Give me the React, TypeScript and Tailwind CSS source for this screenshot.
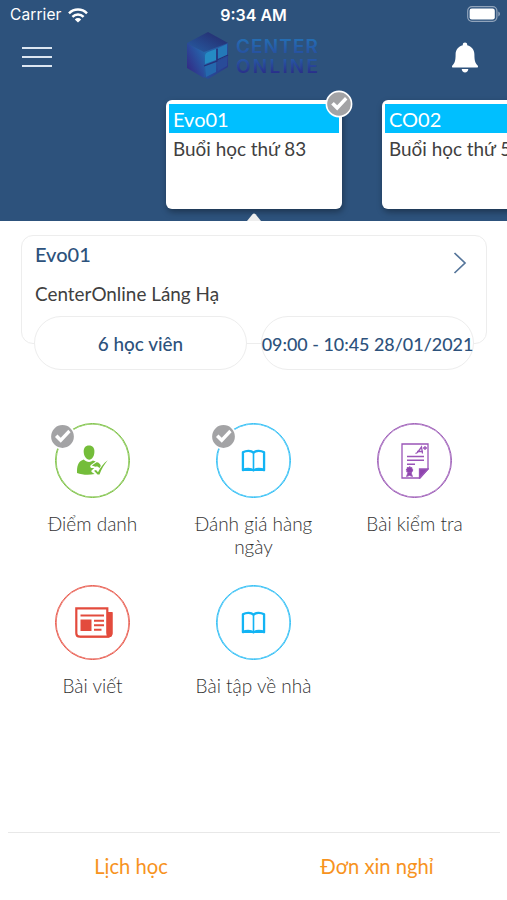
import type { ReactNode } from 'react';

interface Lesson {
  id: string;
  name: string;
  session: string;
  done?: boolean;
}

interface Action {
  label: string;
  ring: string;
  icon: ReactNode;
  done?: boolean;
}

const lessons: Lesson[] = [
  { id: 'evo01', name: 'Evo01', session: 'Buổi học thứ 83', done: true },
  { id: 'co02', name: 'CO02', session: 'Buổi học thứ 5' },
];

function CheckBadge({ className }: { className: string }) {
  return (
    <svg viewBox="0 0 28 28" className={className}>
      <circle cx="14" cy="14" r="12.6" fill="#a3a3a5" stroke="#fff" strokeWidth="1.6" />
      <path d="M6.2 14.6l2.6-2.7 3.4 3.3 7.8-8.1 2.4 2.5-10.2 10.8z" fill="#fff" />
    </svg>
  );
}

function WifiIcon() {
  return (
    <svg viewBox="0 0 20 15" className="w-5 h-[15px]" fill="none" stroke="#fff" strokeWidth="2.5">
      <path d="M1 5.3a12.8 12.8 0 0 1 18 0" />
      <path d="M4.4 8.8a8 8 0 0 1 11.2 0" />
      <path d="M10 14.6L6.8 11.4a4.6 4.6 0 0 1 6.4 0z" fill="#fff" stroke="none" />
    </svg>
  );
}

function BatteryIcon() {
  return (
    <svg viewBox="0 0 34 16" className="w-[34px] h-4">
      <rect x="0.7" y="0.7" width="29.2" height="14.6" rx="4.2" fill="none" stroke="#91a4bb" strokeWidth="1.2" />
      <rect x="2.6" y="2.6" width="25.2" height="10.8" rx="2.2" fill="#fff" />
      <path d="M31.3 5.6c2.2.7 2.2 4.1 0 4.8z" fill="#91a4bb" />
    </svg>
  );
}

function BellIcon() {
  return (
    <svg viewBox="0 0 26 31" className="w-[26px] h-[31px]" fill="#fff">
      <path d="M13 .5c1.3 0 2.2.9 2.2 2.1v.7c4.4 1 7.2 4.6 7.2 9.2 0 5.8.7 8.6 3.2 11 .8.8.4 2.1-.8 2.1H1.2c-1.2 0-1.6-1.3-.8-2.1 2.5-2.4 3.2-5.2 3.2-11 0-4.6 2.8-8.2 7.2-9.2v-.7C10.8 1.4 11.7.5 13 .5z" />
      <path d="M9.7 27h6.6c-.2 2.2-1.5 3.5-3.3 3.5S9.9 29.2 9.7 27z" />
    </svg>
  );
}

function Logo() {
  return (
    <svg viewBox="0 0 134 50" className="w-[134px] h-[50px] ml-0.5 -mt-0.5">
      <defs>
        <linearGradient id="cubeTop" x1="0" y1="1" x2="1" y2="0">
          <stop offset="0" stopColor="#2660a6" />
          <stop offset="1" stopColor="#252668" />
        </linearGradient>
        <linearGradient id="cubeLeft" x1="0" y1="1" x2="1" y2="0">
          <stop offset="0" stopColor="#35207d" />
          <stop offset="1" stopColor="#2271b5" />
        </linearGradient>
        <linearGradient id="cubeRight" x1="0" y1="0" x2="1" y2="1">
          <stop offset="0" stopColor="#2474b4" />
          <stop offset="1" stopColor="#2c2b80" />
        </linearGradient>
        <linearGradient id="logoText" x1="0" y1="0" x2="0" y2="1">
          <stop offset="0" stopColor="#2476b9" />
          <stop offset="1" stopColor="#27489b" />
        </linearGradient>
        <linearGradient id="logoTextLow" x1="0" y1="0" x2="0" y2="1">
          <stop offset="0" stopColor="#2663ad" />
          <stop offset="1" stopColor="#2a2180" />
        </linearGradient>
      </defs>
      <path d="M22 1L42 12 22 23 1 12z" fill="url(#cubeTop)" />
      <path d="M1 12l17 9v26L1 37z" fill="url(#cubeLeft)" />
      <path d="M18 21l24-9v24L22 48l-4-2z" fill="url(#cubeRight)" />
      <path d="M19 25q0-3 3-4l8-3v11l-11 4z" fill="#258bc4" />
      <path d="M32 17l9-4v12l-9 4z" fill="#2479b8" />
      <path d="M19 35l11-4v10l-10 5z" fill="#2468ad" />
      <path d="M32 30l9-4v9l-9 5z" fill="#294b98" />
      <path d="M18 35l13-5V18M31 29l11-5" fill="none" stroke="#263078" strokeWidth="1.3" />
      <g className="font-['Inter'] font-semibold" fontSize="19">
        <text x="50" y="22" textLength="82" fill="url(#logoText)">CENTER</text>
        <text x="50" y="42" textLength="82" fill="url(#logoTextLow)">ONLINE</text>
      </g>
    </svg>
  );
}

function BookIcon() {
  return (
    <svg viewBox="0 0 26 24" className="w-[25px] h-6" fill="none" stroke="#12b4f4" strokeWidth="2.4" strokeLinejoin="round">
      <path d="M13 3.3C10.5.8 5.5.8 2 3v18.5c3-1.6 8.5-1.6 11 .3 2.5-1.9 8-1.9 11-.3V3C20.5.8 15.5.8 13 3.3z" />
      <path d="M13 3.3v19.2" strokeWidth="1.7" />
      <path d="M2 21.6h22" strokeWidth="1.6" />
    </svg>
  );
}

function AttendanceIcon() {
  return (
    <svg viewBox="0 0 32 31" className="w-8 h-[31px] -translate-x-px" fill="#74bd3a">
      <path d="M13 .5c3.7 0 5.6 2.5 5.4 6.5-.2 4-2.2 7.7-5.2 7.7S7.9 11 7.7 7C7.5 3 9.3.5 13 .5z" />
      <path d="M7.7 14.5c1.7 1.7 3.3 2.4 5.4 2.4 1.5 0 2.6-.5 3.8-1.3l2.8.8-4.5 3.3c-1.7 1.2-1 3.2.9 3.3l2.2.1-2.5 2.2c-.8.8-.5 1.7.5 2.3l2.3 1.500c-6 1-12.600.8-17.600-1.200C1 22 1.500 16.500 7.700 14.500z" />
      <path d="M15.800 20.400l4.400-2.900c1.600-.8 4.200 1.300 4.600 3.500l-1.500 2.200c-1.200-1.700-2.500-1.800-3.800-1.500z" />
      <path d="M18 25.700l2-.8 2 2.300c2.500-4.900 5.300-8.500 9.700-11.900-3.300 4.200-6.200 8.700-8.200 14.200h-2z" />
    </svg>
  );
}

function ExamIcon() {
  return (
    <svg viewBox="0 0 28 36" className="w-7 h-9" fill="none" stroke="#9a55b8" strokeWidth="1.3">
      <path d="M1 1h26v25l-8 9H1z" />
      <path d="M18.5 26H27l-8.5 9z" fill="#8e44ad" />
      <path d="M6 13.5h17M6 17.3h17M6 21.2h8" strokeWidth="1.4" />
      <path d="M14.5 10.5l2-1 4-5.5 1 6.5M16 8.500h6M22 5h4M24 3v4" />
      <circle cx="8.5" cy="27" r="3" fill="#8e44ad" strokeDasharray="1.5 .7" />
      <path d="M7 29.5l-1.500 4 3-1 3 1-1.500-4z" fill="#8e44ad" strokeWidth=".8" />
    </svg>
  );
}

function NewsIcon() {
  return (
    <svg viewBox="0 0 38 31" className="w-[38px] h-[31px] translate-x-px">
      <path d="M32 5h5.500v21.500q-.5 4-4.500 4H5v-2h27z" fill="#e34b3d" />
      <path d="M1.300 1.300h31v24.200q0 3.200 2 4.200H4.800q-3.500 0-3.500-3.500z" fill="#fff" stroke="#e34b3d" strokeWidth="2.2" />
      <path d="M33 5.500h4.500v20.500q0 4-2.500 4t-2.300-4z" fill="#e34b3d" />
      <path d="M5.500 8.500H29" stroke="#e34b3d" strokeWidth="2" />
      <path d="M5.500 12.500h11v11.500H5.500z" fill="#e34b3d" />
      <path d="M19 13.700h10M19 18.200h10M19 22.700h7.500" stroke="#e34b3d" strokeWidth="2" />
    </svg>
  );
}

const actions: Action[] = [
  { label: 'Điểm danh', ring: 'text-[#7bc142]', icon: <AttendanceIcon />, done: true },
  { label: 'Đánh giá hàng ngày', ring: 'text-[#2bbdf5]', icon: <BookIcon />, done: true },
  { label: 'Bài kiểm tra', ring: 'text-[#9b59b6]', icon: <ExamIcon /> },
  { label: 'Bài viết', ring: 'text-[#e8574a]', icon: <NewsIcon /> },
  { label: 'Bài tập về nhà', ring: 'text-[#2bbdf5]', icon: <BookIcon /> },
];

function LessonCard({ lesson }: { lesson: Lesson }) {
  return (
    <div className="relative shrink-0 w-44 h-[109px] bg-white rounded-md p-[3px] pt-1 shadow-[1px_3px_6px_rgba(0,0,0,0.35)]">
      <div className="h-[29px] bg-[#00bfff] px-1 text-xl leading-[31px] text-white">{lesson.name}</div>
      <div className="px-1 mt-0.5 text-[18.9px] leading-7 text-[#404040] whitespace-nowrap">{lesson.session}</div>
      {lesson.done && <CheckBadge className="absolute w-7 h-7 -top-2.5 -right-[11px]" />}
    </div>
  );
}

function Header() {
  return (
    <header className="relative h-[221px] bg-[#2d527c] overflow-hidden">
      <div className="grid grid-cols-3 items-center h-[30px] pl-2.5 pr-1.5 text-white font-['Inter'] text-base">
        <div className="flex items-center gap-1.5">
          <span className="text-[15.5px] tracking-[0.1px]">Carrier</span>
          <WifiIcon />
        </div>
        <span className="text-center font-semibold whitespace-nowrap -ml-1">9:34 AM</span>
        <div className="flex justify-end -mt-0.5"><BatteryIcon /></div>
      </div>
      <div className="flex items-center justify-between h-[54px] pl-[22px] pr-[29px]">
        <button className="flex flex-col gap-[7px] w-[30px]">
          <span className="h-0.5 w-full bg-[#dce6f1]" />
          <span className="h-0.5 w-full bg-[#dce6f1]" />
          <span className="h-0.5 w-full bg-[#dce6f1]" />
        </button>
        <Logo />
        <button><BellIcon /></button>
      </div>
      <div className="flex gap-10 pl-[166px] pt-4">
        {lessons.map((l) => (
          <LessonCard key={l.id} lesson={l} />
        ))}
      </div>
      {/* pointer under the selected lesson */}
      <svg viewBox="0 0 14 8" className="absolute bottom-0 left-[247px] w-3.5 h-2">
        <path d="M0 8L5.5 1.3q1.5-1.6 3 0L14 8z" fill="#eee" />
      </svg>
    </header>
  );
}

function App() {
  return (
    <div className="flex flex-col h-[900px] w-[507px] overflow-hidden bg-white font-['Lato',sans-serif]">
      <Header />

      <section className="ml-[21px] mr-5 mt-3.5 h-[109px] border border-[#ededed] rounded-xl px-3 pt-1.5">
        <div className="flex justify-between h-10 pl-px">
          <h2 className="text-xl leading-6 text-[#2d527c] font-medium">Evo01</h2>
          <svg viewBox="0 0 14 24" className="w-3.5 h-6 mt-[9px] mr-[7px]" fill="none" stroke="#55759a" strokeWidth="1.7">
            <path d="M1.5 2L12 12 1.5 22" />
          </svg>
        </div>
        <p className="pl-px text-[18.9px] leading-6 text-[#404040]">CenterOnline Láng Hạ</p>
        <div className="flex gap-3.5 mt-2.5">
          <div className="shrink-0 flex items-center justify-center w-[213px] h-[54px] pt-0.5 rounded-full border border-[#ededed] bg-white text-[18.9px] text-[#2d527c] font-medium">
            6 học viên
          </div>
          <div className="shrink-0 flex items-center justify-center w-[213px] h-[54px] pt-[3px] rounded-full border border-[#ededed] bg-white text-[17.9px] text-[#2d527c] font-medium whitespace-nowrap">
            09:00 - 10:45 28/01/2021
          </div>
        </div>
      </section>

      <main className="grid grid-cols-3 auto-rows-[162px] mx-3 mt-[79px]">
        {actions.map((a) => (
          <div key={a.label} className="flex flex-col items-center">
            <div className={`relative flex items-center justify-center w-[75px] h-[75px] rounded-full border border-current shadow-[inset_0_0_0_0.6px_currentColor] ${a.ring}`}>
              {a.icon}
              {a.done && <CheckBadge className="absolute w-[27px] h-[27px] -top-px -left-[7px]" />}
            </div>
            <span className="mt-3.5 w-[130px] text-center text-[19px] leading-[23px] font-light text-[#333]">{a.label}</span>
          </div>
        ))}
      </main>

      <footer className="mt-auto ml-2 mr-[7px] h-[68px] grid grid-cols-2 justify-items-center items-center border-t border-[#e8e8e8] text-[20.2px] text-[#f7931e]">
        <button>Lịch học</button>
        <button>Đơn xin nghỉ</button>
      </footer>
    </div>
  );
}

export default App;
